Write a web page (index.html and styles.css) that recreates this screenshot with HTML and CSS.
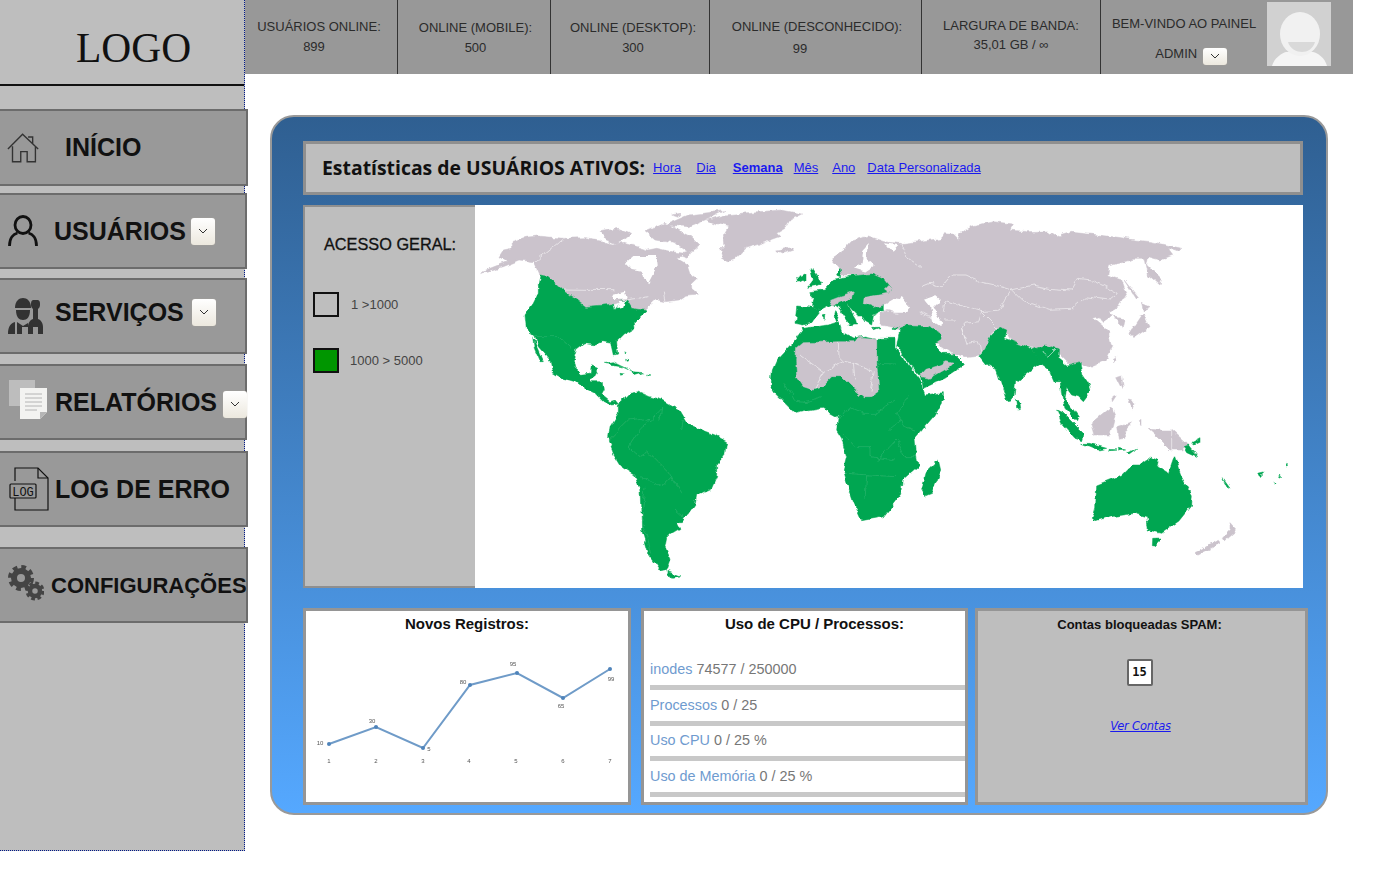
FILE: index.html
```html
<!DOCTYPE html>
<html lang="pt">
<head>
<meta charset="utf-8">
<title>Painel</title>
<link rel="stylesheet" href="styles.css">
</head>
<body>
<div class="app">
  <aside class="sidebar">
    <div class="logo">LOGO</div>
    <nav class="nav">
      <a class="nav-item nav-home">
        <svg class="ico ico-home" viewBox="0 0 36 34"><path d="M1 18 17 2l17 16M28 12V5h-5M6 15v17h9V21h7v11h9V15" /></svg>
        <span class="nav-label">INÍCIO</span>
      </a>
      <a class="nav-item nav-narrow nav-users">
        <svg class="ico ico-user" viewBox="0 0 30 32"><ellipse cx="15" cy="10" rx="8" ry="8.5"/><path d="M1.500 31c0-8 4-12 8-13M28.500 31c0-8-4-12-8-13"/></svg>
        <span class="nav-label">USUÁRIOS</span>
        <span class="drop"><svg viewBox="0 0 10 6"><path d="M1 1l4 4 4-4"/></svg></span>
      </a>
      <a class="nav-item nav-narrow nav-serv">
        <svg class="ico ico-serv" viewBox="0 0 36 38"><path d="M7 11C7 4 11 1 15 1s8 3 8 10z"/><path d="M8 13h14c0 7-3 10-7 10s-7-3-7-10z"/><path d="M0 37c0-8 3-11 7-12v12zM9 25l6 4 5-3v4h-6v7H9z"/><path d="M25 3c-2 1-2 2-2 5 0 2 1 3 2 4v10c-3 1-5 4-5 8v7h5v-7h5v7h5v-7c0-4-2-7-5-8V12c1-1 2-2 2-4 0-3 0-4-2-5z"/></svg>
        <span class="nav-label nav-lift">SERVIÇOS</span>
        <span class="drop drop-serv"><svg viewBox="0 0 10 6"><path d="M1 1l4 4 4-4"/></svg></span>
      </a>
      <a class="nav-item nav-narrow nav-rep">
        <svg class="ico ico-rep" viewBox="0 0 40 40">
          <rect class="doc-back" x="0" y="0" width="26" height="26"/>
          <path class="doc-front" d="M11 8h27v24l-7 7H11z"/>
          <path class="doc-fold" d="M31 39v-7h7z"/>
          <path class="doc-lines" d="M16 14h17M16 18h17M16 22h17M16 26h17M16 30h12"/>
        </svg>
        <span class="nav-label">RELATÓRIOS</span>
        <span class="drop drop-rep"><svg viewBox="0 0 10 6"><path d="M1 1l4 4 4-4"/></svg></span>
      </a>
      <a class="nav-item nav-log">
        <svg class="ico ico-log" viewBox="0 0 40 44">
          <path class="log-page" d="M6 14V1h23l10 10v32H6V31"/><path class="log-page" d="M29 1v10h10"/>
          <rect class="log-tag" x="1" y="17" width="26" height="14" rx="1"/>
          <text class="log-text" x="14" y="28.500">LOG</text>
        </svg>
        <span class="nav-label">LOG DE ERRO</span>
      </a>
      <a class="nav-item nav-conf">
        <svg class="ico ico-conf" viewBox="0 0 36 36">
          <circle class="gear-teeth" cx="13" cy="13" r="10.500"/><circle class="gear-ring" cx="13" cy="13" r="7"/>
          <circle class="gear-teeth small" cx="27" cy="26" r="7.500"/><circle class="gear-ring small" cx="27" cy="26" r="5"/>
        </svg>
        <span class="nav-label nav-label-conf">CONFIGURAÇÕES</span>
      </a>
    </nav>
  </aside>

  <main class="main">
    <header class="topbar">
      <div class="stat stat-a"><span>USUÁRIOS ONLINE:</span><span class="val-a">899</span></div>
      <div class="stat stat-b"><span>ONLINE (MOBILE):</span><span>500</span></div>
      <div class="stat stat-c"><span>ONLINE (DESKTOP):</span><span>300</span></div>
      <div class="stat stat-d"><span>ONLINE (DESCONHECIDO):</span><span class="val-d">99</span></div>
      <div class="stat stat-e"><span>LARGURA DE BANDA:</span><span>35,01 GB / ∞</span></div>
      <div class="welcome">
        <div class="welcome-text">
          <span>BEM-VINDO AO PAINEL</span>
          <span class="admin">ADMIN <span class="drop drop-admin"><svg viewBox="0 0 10 6"><path d="M1 1l4 4 4-4"/></svg></span></span>
        </div>
        <svg class="avatar" viewBox="0 0 64 64">
          <rect class="av-bg" width="64" height="64"/>
          <path class="av-fg" d="M5 64c2-8 10-13 14-14h27c5 1 12 6 14 14z"/>
          <ellipse class="av-head" cx="33" cy="32" rx="20" ry="22"/>
          <path class="av-smile" d="M21 40h27c-2 7-8 10-13 10s-12-3-14-10z"/>
        </svg>
      </div>
    </header>

    <section class="panel">
      <div class="head">
        <strong class="head-title">Estatísticas de USUÁRIOS ATIVOS:</strong>
        <a class="link l-hora" href="#">Hora</a>
        <a class="link l-dia" href="#">Dia</a>
        <a class="link l-sem" href="#">Semana</a>
        <a class="link l-mes" href="#">Mês</a>
        <a class="link l-ano" href="#">Ano</a>
        <a class="link l-data" href="#">Data Personalizada</a>
      </div>

      <div class="map-row">
        <div class="legend">
          <div class="legend-title">ACESSO GERAL:</div>
          <div class="legend-item legend-one"><span class="swatch"></span><span>1 &gt;1000</span></div>
          <div class="legend-item legend-two"><span class="swatch swatch-green"></span><span>1000 &gt; 5000</span></div>
        </div>
        <div class="map">
          <svg class="world" viewBox="0 15 2484 1149">
            <defs>
              <filter id="rough" x="0" y="0" width="100%" height="100%" filterUnits="userSpaceOnUse" primitiveUnits="userSpaceOnUse">
                <feTurbulence type="fractalNoise" baseFrequency=".035" numOctaves="3" seed="4" result="n"/>
                <feDisplacementMap in="SourceGraphic" in2="n" scale="18" xChannelSelector="R" yChannelSelector="G"/>
              </filter>
            </defs>
            <g class="map-art">
            <rect class="map-bg" x="0" y="0" width="2484" height="1200"/>
            <g class="land">
              <path d="M15 218 45 205 70 195 95 185 72 170 85 150 110 145 108 125 150 112 190 108 265 115 330 113 375 120 392 130 420 135 450 130 480 138 520 150 545 145 590 155 625 160 650 155 640 175 620 168 605 175 640 195 650 225 667 237 645 258 672 282 632 286 612 300 570 305 545 300 510 332 470 325 450 300 420 312 330 320 290 290 258 268 215 228 195 225 178 185 135 180 85 200 45 212Z"/>
              <path d="M375 95 430 85 470 100 430 135 395 122ZM510 95 570 70 650 110 675 135 640 160 600 130 540 120ZM570 75 640 45 750 32 690 60 640 80ZM530 155 560 150 550 160ZM590 45 620 40 610 52Z"/>
              <path d="M695 60 750 45 850 35 920 30 980 42 945 60 930 85 905 100 915 110 860 130 810 145 780 175 760 182 740 170 735 150 750 135 745 105 760 80 720 70Z"/>
              <path d="M905 150 950 143 955 150 925 160Z"/>
              <path d="M1068 175 1105 150 1125 125 1180 108 1230 125 1270 130 1290 130 1330 125 1400 115 1405 98 1430 100 1455 125 1445 135 1455 100 1490 78 1555 65 1615 72 1605 90 1655 95 1720 93 1745 110 1790 97 1870 105 1930 112 1980 120 2030 125 2120 145 2110 155 2080 145 2095 165 2055 180 2020 170 2015 195 2060 240 2055 255 2020 225 2010 175 1975 175 1900 195 1895 225 1940 240 1955 280 1930 320 1905 335 1920 355 1950 360 1945 385 1925 365 1910 345 1880 365 1870 350 1855 355 1880 375 1900 395 1910 440 1890 480 1840 500 1815 490 1785 495 1750 460 1730 440 1700 450 1670 445 1610 425 1590 390 1570 385 1550 400 1520 465 1470 470 1435 460 1390 430 1380 430 1400 410 1365 385 1330 380 1270 385 1215 375 1215 340 1240 330 1225 300 1180 285 1150 225 1085 225 1095 205Z"/>
              <path d="M1850 670 1910 622 1920 645 1905 705 1860 705ZM1925 680 1970 665 1945 690 1950 715 1930 718ZM2020 688 2060 690 2090 690 2135 730 2120 750 2085 750 2045 710ZM1925 530 1940 525 1945 570ZM1960 600 1980 605 1975 628ZM1915 475 1925 470 1920 490ZM1965 400 2005 340 2025 380 1975 415ZM2000 310 2025 320 2005 330ZM1950 240 1990 290 1985 295ZM2265 968 2285 990 2250 1020 2245 1012 2265 990ZM2160 1058 2230 1018 2235 1030 2170 1065ZM1910 590 1925 585 1912 605ZM1990 665 1998 658 1998 680Z"/>
            </g>
            <g class="water">
              <path d="M450 190 475 168 545 168 548 195 520 250 500 232 500 215 470 210Z"/>
              <path d="M410 285 450 275 455 295 425 298ZM1135 205 1160 190 1165 150 1178 135 1175 175 1200 195 1170 215ZM1230 130 1270 135 1250 155ZM1225 315 1255 298 1275 300 1280 290 1305 320 1300 335 1255 335 1235 330ZM1348 300 1380 288 1395 300 1375 320 1405 370 1395 378 1375 365 1365 320Z"/>
            </g>
            <g class="hit">
              <path d="M195 225 215 228 258 268 290 290 330 320 415 312 420 330 440 300 455 300 470 325 515 332 490 355 478 368 480 385 445 405 425 425 428 462 418 465 410 430 380 425 365 432 330 428 305 448 295 480 300 505 320 523 345 520 350 497 368 505 345 545 385 545 388 570 380 585 405 605 420 600 430 612 410 615 385 605 360 580 320 560 300 545 265 535 232 515 225 480 190 440 180 410 155 395 150 345 175 310 190 280 190 255Z"/>
              <path d="M172 410 185 440 205 485 195 485 178 445Z"/>
              <path d="M430 612 450 595 465 580 490 575 525 590 560 600 610 628 635 670 680 690 720 705 755 725 750 760 725 790 725 830 710 865 665 885 660 915 625 965 605 965 615 985 590 1000 575 1015 570 1040 585 1075 575 1105 555 1110 520 1060 500 990 495 870 480 825 440 800 415 760 400 720 405 680 430 640Z"/>
              <path d="M575 1112 615 1128 590 1132ZM388 490 415 485 470 512 440 498ZM470 515 505 518 475 527ZM512 522 525 525 514 527ZM432 520 445 522 434 526ZM447 455 450 458 448 462ZM455 478 462 482 456 484Z"/>
              <path d="M892 510 905 480 960 420 985 385 1060 375 1090 365 1100 395 1135 415 1170 408 1205 415 1260 415 1260 440 1335 540 1350 585 1405 578 1405 600 1375 650 1320 715 1325 770 1330 800 1285 840 1280 880 1260 905 1225 950 1160 962 1135 905 1120 860 1105 810 1115 770 1100 715 1085 690 1090 650 1045 625 960 640 900 580 888 560Z"/>
              <path d="M1005 203 1015 208 1040 245 1030 255 998 262 1015 240ZM965 235 990 222 990 240 968 250ZM965 318 1015 322 1040 330 1010 368 985 375 960 370Z"/>
              <path d="M1000 275 1045 270 1075 238 1130 228 1190 222 1230 240 1250 265 1240 280 1225 300 1225 330 1195 345 1190 375 1172 365 1160 345 1150 345 1115 310 1145 360 1148 372 1125 372 1090 322 1075 312 1040 330 1015 322 1020 295ZM1085 225 1095 205 1100 230ZM1040 348 1050 345 1048 358ZM1082 335 1090 345 1083 370 1078 350ZM1118 372 1135 368 1128 378ZM1190 385 1215 385 1195 392ZM1255 383 1270 378 1255 392Z"/>
              <path d="M1275 385 1290 378 1355 380 1395 400 1395 420 1380 430 1400 460 1435 460 1465 490 1440 515 1410 535 1345 565 1340 535 1310 500 1265 435Z"/>
              <path d="M1515 470 1550 405 1575 382 1595 390 1590 415 1675 450 1700 490 1670 510 1625 545 1620 590 1605 608 1595 600 1565 510 1535 495ZM1625 600 1638 610 1640 625 1628 627Z"/>
              <path d="M1675 450 1710 435 1750 450 1750 475 1775 495 1815 485 1820 520 1840 550 1848 575 1825 605 1810 590 1790 585 1775 565 1770 595 1810 650 1805 665 1770 625 1758 545 1735 545 1720 510 1700 495Z"/>
              <path d="M1745 630 1765 640 1825 700 1820 722 1800 715 1760 670ZM1820 730 1840 730 1895 745 1870 750ZM1902 748 1925 750 1905 752ZM1930 745 1952 750 1932 752ZM1955 760 1985 748 1965 762ZM2125 738 2140 735 2168 770 2135 755ZM2148 727 2175 713 2175 725 2155 735Z"/>
              <path d="M1865 855 1940 825 1970 795 2000 795 2030 772 2050 780 2045 800 2080 822 2098 770 2118 825 2152 885 2150 915 2110 965 2060 1000 2020 990 2015 950 1980 940 1910 950 1860 965 1852 958 1862 920ZM2033 1018 2060 1017 2040 1038 2032 1037Z"/>
              <path d="M1390 780 1397 810 1370 880 1350 888 1340 870 1355 815ZM2242 833 2265 865 2255 860ZM2350 820 2370 815 2355 830ZM2400 845 2405 848 2400 851ZM2415 823 2420 826 2414 829ZM2435 790 2442 792 2436 795Z"/>
            </g>
            <g class="water">
              <path d="M425 325 435 300 450 300 445 320Z"/>
            </g>
            <g class="slab">
              <path d="M965 445 985 428 1090 425 1135 425 1155 412 1205 415 1205 490 1212 575 1190 590 1165 590 1130 560 1100 530 1070 530 1040 560 1015 570 985 560 965 530 962 480Z"/>
              <path d="M1065 300 1090 290 1135 275 1130 295 1100 305 1075 315ZM1170 292 1240 280 1235 310 1195 322 1168 310ZM1335 525 1350 508 1395 495 1415 485 1435 490 1425 500 1365 535 1340 530ZM1240 255 1250 265 1240 280 1225 270Z"/>
            </g>
            <g class="borders-grey">
              <path d="M180 185 265 115M258 270 415 272M570 305 565 275M450 300 520 290M975 465 1045 518 1105 483 1135 490 1198 515 1188 575M1090 425 1092 470 1105 483M1135 490 1140 540M1045 518 1020 565"/>
              <path d="M1340 260 1365 250 1400 260 1430 225 1470 225 1515 245 1560 255 1610 270 1675 255 1720 265 1790 270 1810 235 1850 240 1895 260 1930 280 1905 300 1830 290 1790 325 1720 328 1640 300 1610 270 1590 300 1570 330 1520 335 1450 315 1410 305 1405 335M1520 335 1510 365 1470 370 1460 385 1475 430 1510 425 1520 465M1440 360 1410 360M1330 335 1360 350 1400 360M1520 335 1545 360 1570 385M1460 385 1470 420M1700 455 1720 470 1740 450M1280 130 1295 170 1340 200M2090 690 2090 752M1225 335 1270 340"/>
            </g>
            <g class="borders-green">
              <path d="M180 410 250 410 290 445M400 720 460 660 500 655 525 665 560 625M460 740 485 700 520 660M460 740 495 770 520 755 580 815 620 880M495 830 560 860 590 830M510 860 500 960 530 1060M600 930 640 965M625 660 620 690M555 660 560 625"/>
              <path d="M930 550 960 600 990 605 1040 590M1090 660 1125 620 1165 640 1205 640 1260 600M1105 700 1140 740 1185 740 1185 770 1260 780M1110 820 1185 825 1260 830M1175 825 1170 900M1205 780 1260 720M1300 590 1265 640 1290 680 1320 690M1240 690 1280 660M1265 720 1290 770 1325 770M1205 415 1205 490 1260 492"/>
            </g>
            </g>
          </svg>
        </div>
      </div>

      <div class="cards">
        <div class="card card-white">
          <div class="card-title">Novos Registros:</div>
          <svg class="chart" viewBox="306 640 322 162">
            <polyline class="chart-line" points="329,744 376,727 423,748 470,685 517,673 563,698 610,669"/>
            <g class="chart-dots"><circle cx="329" cy="744" r="2"/><circle cx="376" cy="727" r="2"/><circle cx="423" cy="748" r="2"/><circle cx="470" cy="685" r="2"/><circle cx="517" cy="673" r="2"/><circle cx="563" cy="698" r="2"/><circle cx="610" cy="669" r="2"/></g>
            <g class="chart-text">
              <text x="320" y="745">10</text><text x="372" y="723">30</text><text x="429" y="751">5</text><text x="463" y="684">80</text><text x="513" y="666">95</text><text x="561" y="708">65</text><text x="611" y="681">99</text>
              <text x="329" y="763">1</text><text x="376" y="763">2</text><text x="423" y="763">3</text><text x="469" y="763">4</text><text x="516" y="763">5</text><text x="563" y="763">6</text><text x="610" y="763">7</text>
            </g>
          </svg>
        </div>
        <div class="card card-white card-cpu">
          <div class="card-title card-title-cpu">Uso de CPU / Processos:</div>
          <ul class="meters">
            <li class="meter"><span class="meter-name">inodes</span> 74577 / 250000</li>
            <li class="meter"><span class="meter-name">Processos</span> 0 / 25</li>
            <li class="meter"><span class="meter-name">Uso CPU</span> 0 / 25 %</li>
            <li class="meter"><span class="meter-name">Uso de Memória</span> 0 / 25 %</li>
          </ul>
        </div>
        <div class="card card-grey">
          <div class="card-title card-title-sm">Contas bloqueadas SPAM:</div>
          <div class="count">15</div>
          <a class="see" href="#">Ver Contas</a>
        </div>
      </div>
    </section>
  </main>
</div>
</body>
</html>
```

FILE: styles.css
```css
* { box-sizing: border-box; }
html, body { margin: 0; padding: 0; background: #fff; }
body { font-family: "Liberation Sans", Arial, sans-serif; color: #222; }

.app { display: flex; align-items: flex-start; width: 1386px; height: 880px; overflow: hidden; }

/* sidebar */
.sidebar {
  flex: none; width: 245px; min-width: 0; height: 851px; background: #bebebe;
  border-right: 1px dotted #00188a; border-bottom: 1px dotted #00188a;
  position: relative; z-index: 2;
}
.logo {
  height: 86px; border-bottom: 2px solid #111; padding: 24px 0 0 76px;
  font: 41.5px/48px "Liberation Serif", "Times New Roman", serif; color: #111;
}
.nav { display: flex; flex-direction: column; }
.nav-item {
  display: flex; align-items: center; flex: none; width: 248px; height: 76px;
  background: #999; border: 2px solid #6c6c6c; border-left: 0; color: #111;
}
.nav-narrow { width: 247px; }
.nav-home { margin-top: 23px; height: 77px; }
.nav-users { margin-top: 7px; }
.nav-serv { margin-top: 9px; }
.nav-rep { margin-top: 10px; }
.nav-log { margin-top: 11px; }
.nav-conf { margin-top: 20px; }
.nav-label { font-weight: 700; font-size: 25px; line-height: 30px; white-space: nowrap; }
.nav-home .nav-label { margin: 0 0 2px 25px; }
.nav-lift { margin-bottom: 8px; }
.nav-label-conf { font-size: 22px; margin: 2px 0 0 1px; }

.ico { flex: none; display: block; }
.ico-home { width: 33px; height: 32px; margin-left: 7px; fill: none; stroke: #333; stroke-width: 1.500; }
.ico-user { width: 30px; height: 32px; margin: 0 16px 0 8px; fill: none; stroke: #111; stroke-width: 2.800; }
.ico-serv { width: 36px; height: 38px; margin: 0 11px 0 8px; fill: #333; }
.ico-rep { width: 40px; height: 40px; margin: -4px 6px 0 9px; }
.doc-back { fill: #bdbdbd; }
.doc-front { fill: #f3f3f1; }
.doc-fold { fill: #b5b5b5; }
.doc-lines { fill: none; stroke: #b4b4b4; stroke-width: 1; }
.ico-log { width: 40px; height: 44px; margin: 0 6px 0 9px; }
.log-page { fill: none; stroke: #111; stroke-width: 1.200; }
.log-tag { fill: none; stroke: #111; stroke-width: 1.200; }
.log-text { font: 400 12px "Liberation Mono", monospace; fill: #111; text-anchor: middle; }
.ico-conf { width: 36px; height: 36px; margin: -4px 6px 0 8px; }
.gear-teeth { fill: none; stroke: #444; stroke-width: 5; stroke-dasharray: 4.500 3.740; }
.gear-teeth.small { stroke-width: 4; stroke-dasharray: 3.500 2.390; }
.gear-ring { fill: none; stroke: #444; stroke-width: 6; }
.gear-ring.small { stroke-width: 4.500; }

.drop {
  display: inline-flex; align-items: center; justify-content: center; flex: none;
  width: 24px; height: 27px; margin-left: 5px; border-radius: 3px;
  background: linear-gradient(#fff, #ece8de); box-shadow: 0 0 1px #b9ae98;
}
.drop svg { width: 10px; height: 6px; fill: none; stroke: #333; stroke-width: 1; }
.drop-serv { margin: 0 0 8px 8px; }
.drop-rep { margin: 4px 0 0 6px; }
.drop-admin { width: 24px; height: 17px; margin-left: 2px; vertical-align: -1px; }

/* top bar */
.main { flex: none; width: 1108px; display: flex; flex-direction: column; }
.topbar { display: flex; height: 74px; background: #989898; color: #2b2b2b; font-size: 13px; }
.stat { display: flex; flex-direction: column; align-items: center; border-right: 1px solid #333; white-space: nowrap; }
.stat-a { width: 153px; padding: 17px 4px 0 0; line-height: 19.500px; }
.val-a { margin-right: 10px; }
.stat-b { width: 153px; padding: 18px 0 0 3px; line-height: 20px; }
.stat-c { width: 159px; padding: 18px 0 0 6px; line-height: 20px; }
.stat-d { width: 212px; padding: 16px 0 0 3px; line-height: 22px; }
.val-d { margin-right: 34px; }
.stat-e { width: 179px; padding-top: 16px; line-height: 19px; }
.welcome { flex: 1; display: flex; padding: 2px 0 0 11px; }
.welcome-text { width: 155px; display: flex; flex-direction: column; align-items: center; padding: 12px 11px 0 0; white-space: nowrap; line-height: 19px; }
.admin { margin-top: 11px; margin-left: 14px; }
.avatar { flex: none; width: 64px; height: 64px; }
.av-bg { fill: #d1d1d1; }
.av-fg { fill: #f5f5f5; }
.av-head { fill: #f1f1f1; }
.av-smile { fill: #d9d9d9; }

/* panel */
.panel {
  width: 1058px; height: 700px; margin: 41px 0 0 25px; padding: 24px 0 0 31px;
  border: 2px solid #999; border-radius: 24px;
  background: linear-gradient(#2f5f91, #55a8ff);
}
.head {
  display: flex; align-items: center; width: 1000px; height: 54px;
  background: #bebebe; border: 3px solid #8f8f8f; padding: 0 0 2px 16px;
}
.head-title { font: 700 19.400px "Open Sans", sans-serif; color: #111; white-space: nowrap; margin-right: 8px; }
.link { font-size: 13px; color: #1a1aee; }
.l-dia { margin-left: 15px; }
.l-sem { margin-left: 17px; font-weight: 700; }
.l-mes { margin-left: 11px; }
.l-ano { margin-left: 14px; }
.l-data { margin-left: 12px; }

.map-row { display: flex; width: 1000px; height: 383px; margin-top: 10px; }
.legend { flex: 0 0 172px; background: #bebebe; border: 2px solid #8f8f8f; border-right: 0; }
.legend-title { margin-top: 27px; padding-left: 19px; font-size: 16.300px; line-height: 20px; color: #111; -webkit-text-stroke: .3px #111; white-space: nowrap; }
.legend-item { display: flex; align-items: center; padding-left: 8px; font-size: 13px; color: #444; }
.legend-one { margin-top: 38px; gap: 12px; }
.legend-two { margin-top: 31px; gap: 11px; }
.swatch { flex: none; width: 26px; height: 25px; border: 2px solid #111; }
.swatch-green { background: #009600; }
.map { flex: 1; background: #fff; overflow: hidden; }
.world { display: block; width: 828px; height: 383px; filter: blur(.4px); }
.map-art { filter: url(#rough); }
.map-bg { fill: #fff; }
.land { fill: #cbc3cc; stroke: #cbc3cc; stroke-width: 1.500; stroke-linejoin: round; }
.hit { fill: #00a651; stroke: #00a651; stroke-width: 1.500; stroke-linejoin: round; }
.water { fill: #fff; }
.slab { fill: #cbc3cc; stroke: #cbc3cc; stroke-width: 1.500; stroke-linejoin: round; }
.borders-grey { fill: none; stroke: #fff; stroke-width: 2; opacity: .8; }
.borders-green { fill: none; stroke: #fff; stroke-width: 1.500; opacity: .22; }

/* cards */
.cards { display: grid; grid-template-columns: 328px 327px 333px; column-gap: 10px; width: 1005px; height: 197px; margin-top: 20px; }
.cards .card:last-child { margin-left: -3px; width: 333px; }
.card { border: 3px solid #959595; height: 197px; text-align: center; overflow: hidden; }
.card-white { background: #fff; }
.card-grey { background: #bebebe; }
.card-title { font-weight: 700; font-size: 15px; line-height: 20px; margin-top: 3px; color: #111; }
.card-title-cpu { text-align: center; padding-left: 20px; }
.card-title-sm { font-size: 13px; margin: 4px 4px 0 0; }
.chart { display: block; width: 322px; height: 162px; margin-top: 6px; filter: blur(.4px); }
.chart-line { fill: none; stroke: #6f9bc8; stroke-width: 2; }
.chart-dots { fill: #4f83ba; }
.chart-text { font-size: 6px; fill: #555; text-anchor: middle; }

.card-cpu { text-align: left; }
.meters { list-style: none; margin: 20px 0 0; padding: 0 0 0 6px; font-size: 14.400px; color: #777; }
.meter { height: 35.600px; line-height: 20px; position: relative; padding-top: 5px; white-space: nowrap; }
.meter::after { content: ""; position: absolute; left: 0; right: 0; top: 31px; height: 5px; background: #c8c8c8; }
.meter-name { color: #6f9bcf; }

.count {
  width: 26px; height: 27px; margin: 24px auto 0; border: 2px solid #666; border-radius: 2px; background: #fff;
  font: 700 12px/23px "DejaVu Sans Mono", monospace; color: #111;
  position: relative; left: -2px;
}
.see { display: block; width: 61px; margin: 32px auto 0; font: italic 11.500px/16px "DejaVu Sans", sans-serif; color: #1a1aee; white-space: nowrap; letter-spacing: -.2px; position: relative; left: -1px; text-decoration: underline; }
```
